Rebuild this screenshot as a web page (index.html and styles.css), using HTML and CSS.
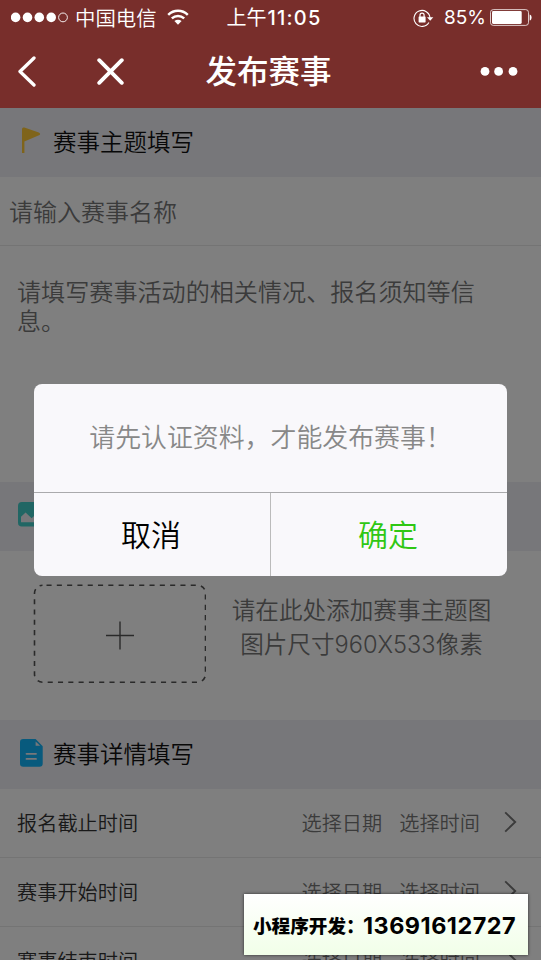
FILE: index.html
```html
<!DOCTYPE html>
<html lang="zh-CN">
<head>
<meta charset="utf-8">
<title>发布赛事</title>
<link rel="stylesheet" href="styles.css">
</head>
<body>
<div class="screen">
  <header class="top">
    <div class="status">
      <svg class="signal" width="58" height="12" viewBox="0 0 58 12"><g fill="#fff"><circle cx="4.6" cy="5.4" r="4.8"/><circle cx="16.5" cy="5.4" r="4.8"/><circle cx="28.3" cy="5.4" r="4.8"/><circle cx="40.2" cy="5.4" r="4.8"/></g><circle cx="52" cy="5.4" r="4.4" fill="none" stroke="#fff" stroke-width=".9"/></svg>
      <span class="carrier">中国电信</span>
      <svg class="wifi" width="22" height="17" viewBox="0 0 22 17"><g fill="none" stroke="#fff" stroke-width="2.5"><path d="M1.2 5.8C6.8.5 15.2.5 20.8 5.8"/><path d="M4.8 9.4C8.4 6.2 13.6 6.2 17.2 9.4"/></g><path d="M7.4 12C9.5 10.2 12.5 10.2 14.6 12L11 15.8Z" fill="#fff"/></svg>
      <span class="clock">上午<span class="digits">11:05</span></span>
      <svg class="lock" width="21" height="18" viewBox="0 0 21 18"><path d="M15.9 13.5A8 8 0 1 1 17 9" fill="none" stroke="#fff" stroke-width="1.1"/><path d="M14 8.2h6.3L17.2 11.8Z" fill="#fff"/><rect x="5.6" y="7.4" width="7" height="6" rx=".6" fill="#fff"/><path d="M7 8V6.2a2.05 2.05 0 0 1 4.1 0V8" fill="none" stroke="#fff" stroke-width="1.2"/></svg>
      <span class="percent">85%</span>
      <svg class="battery" width="42" height="17" viewBox="0 0 42 17"><rect x=".5" y=".6" width="38" height="15.8" rx="2.8" fill="none" stroke="#fff" stroke-opacity=".75"/><rect x="2" y="2.1" width="29.7" height="12.8" rx="1.3" fill="#fff"/><path d="M39.7 5.4c2.5.5 2.5 5.7 0 6.2Z" fill="#fff"/></svg>
    </div>
    <nav class="nav">
      <svg class="back" width="19" height="32" viewBox="0 0 19 32"><path d="M17 2 3 15.5 17 29" fill="none" stroke="#fff" stroke-width="3.3" stroke-linecap="round" stroke-linejoin="round"/></svg>
      <svg class="close" width="27" height="27" viewBox="0 0 27 27"><path d="m2.2 2.2 22.6 22.6M24.8 2.2 2.2 24.8" stroke="#fff" stroke-width="3.8" stroke-linecap="round"/></svg>
      <h1>发布赛事</h1>
      <svg class="more" width="38" height="10" viewBox="0 0 38 10" fill="#fff"><circle cx="5" cy="4.4" r="4.4"/><circle cx="18.6" cy="4.4" r="4.4"/><circle cx="33" cy="4.4" r="4.4"/></svg>
    </nav>
  </header>
  <main class="page">
    <h2 class="section">
      <svg width="24" height="28" viewBox="0 0 24 28"><path d="M2 2.2Q2-.2 4.4.6L18.8 5.6Q21.4 6.9 19 8.3L4.4 14.6V26H2Z" fill="#ffc936"/></svg>
      赛事主题填写
    </h2>
    <div class="field">请输入赛事名称</div>
    <div class="textarea">请填写赛事活动的相关情况、报名须知等信息。</div>
    <h2 class="section">
      <svg class="picture" width="26" height="25" viewBox="0 0 26 25"><rect width="26" height="24.5" rx="3.8" fill="#42cdc8"/><path d="M3 20.3v-5.5l4.6-4.2 6 5.6 4.4-4 5 4v4.1Z" fill="#efeff4"/></svg>
    </h2>
    <div class="upload">
      <svg width="173" height="99" viewBox="0 0 173 99"><rect x="1.5" y="1.2" width="171" height="97" rx="8" fill="none" stroke="#555" stroke-width="1.6" stroke-dasharray="5.1 5.2" stroke-dashoffset="-4"/><path d="M73 51.5h28M87 37.5v28" stroke="#555" stroke-width="1.4"/></svg>
      <p>请在此处添加赛事主题图<br>图片尺寸960X533像素</p>
    </div>
    <h2 class="section">
      <svg width="24" height="28" viewBox="0 0 24 28"><path d="M3.2 0H15.6L22.7 7.2V24.5a3.2 3.2 0 0 1-3.2 3.2H3.2A3.2 3.2 0 0 1 0 24.5V3.2A3.2 3.2 0 0 1 3.2 0Z" fill="#10b4fa"/><path d="M15.6 2.5V6.8h4.6Z" fill="#efeff4"/><path d="M6.5 14.8H16M6.5 19.9H16" stroke="#efeff4" stroke-width="1.8" stroke-linecap="round"/></svg>
      赛事详情填写
    </h2>
    <div class="row"><span class="label">报名截止时间</span><span>选择日期</span><span class="time">选择时间</span><svg width="13" height="22" viewBox="0 0 13 22"><path d="m1.2 1.4 10 9.6-10 9.6" fill="none" stroke="#777" stroke-width="1.9"/></svg></div>
    <div class="row"><span class="label">赛事开始时间</span><span>选择日期</span><span class="time">选择时间</span><svg width="13" height="22" viewBox="0 0 13 22"><path d="m1.2 1.4 10 9.6-10 9.6" fill="none" stroke="#777" stroke-width="1.9"/></svg></div>
    <div class="row"><span class="label">赛事结束时间</span><span>选择日期</span><span class="time">选择时间</span><svg width="13" height="22" viewBox="0 0 13 22"><path d="m1.2 1.4 10 9.6-10 9.6" fill="none" stroke="#777" stroke-width="1.9"/></svg></div>
    <div class="mask"></div>
  </main>
  <div class="dialog" role="dialog">
    <p>请先认证资料，才能发布赛事！</p>
    <div class="actions"><button>取消</button><button class="ok">确定</button></div>
  </div>
  <div class="contact"><span>小程序开发：</span><b>13691612727</b></div>
</div>
</body>
</html>
```
FILE: styles.css
```css
* { box-sizing: border-box; margin: 0; }
body { font-family: Inter, "Noto Sans CJK SC", sans-serif; font-weight: 350; }
svg { display: block; flex: none; }
.screen { position: relative; display: flex; flex-direction: column; width: 541px; height: 960px; overflow: hidden; }
.top { height: 108px; flex: none; background: #782e2b; color: #fff; }
.status { display: flex; align-items: center; height: 35px; padding-left: 11px; white-space: nowrap; }
.carrier { width: 82px; margin-left: 6px; padding-bottom: 2px; font-size: 20.4px; }
.wifi { margin-left: 9.5px; }
.clock { width: 96px; margin-left: 38px; padding-bottom: 2px; font-size: 20px; font-weight: 400; }
.digits { margin-left: 1px; font-weight: 500; letter-spacing: 1.2px; }
.lock { margin-left: 90.5px; }
.percent { width: 42px; margin-left: 10px; font-size: 19px; font-weight: 400; }
.battery { margin-left: 4px; }
.nav { display: flex; align-items: center; height: 73px; padding: 0 23px 0 17px; }
.close { margin-left: 61px; }
.nav h1 { margin-left: 81.5px; font-size: 31.5px; line-height: 44px; font-weight: 500; white-space: nowrap; }
.more { margin-left: auto; }
.page { position: relative; flex: 1; min-height: 0; overflow: hidden; background: #fff; }
.section { display: flex; align-items: center; gap: 9px; height: 69px; padding-left: 20px; padding-bottom: 3px; background: #efeff4; color: #111; font-size: 23.5px; font-weight: 350; }
.picture { margin: -2px 0 0 -2px; }
.field { height: 69px; padding-left: 9px; border-bottom: 1px solid #e8e8e8; color: #777; font-size: 24px; line-height: 71px; }
.textarea { height: 236px; padding: 32px 48px 0 17px; color: #777; font-size: 24.1px; line-height: 29px; }
.upload { display: flex; height: 169px; padding: 33px 0 0 33px; color: #777; }
.upload p { width: 262px; margin: 10px 0 0 24.5px; font-size: 23.6px; line-height: 34px; text-align: center; white-space: nowrap; }
.row { display: flex; align-items: center; height: 69px; padding: 0 24px 1px 17px; border-bottom: 1px solid #e8e8e8; color: #777; font-size: 20.2px; white-space: nowrap; }
.row svg { margin-top: -1px; }
.label { margin-right: auto; color: #333; }
.time { margin: 0 24px 0 17px; }
.mask { position: absolute; inset: 0; background: rgba(0, 0, 0, .5); }
.dialog { position: absolute; left: 34px; top: 384px; width: 473px; height: 192px; border-radius: 8px; overflow: hidden; background: #f9f8fb; }
.dialog p { height: 108px; color: #888; font-size: 25.9px; line-height: 107px; text-align: center; white-space: nowrap; }
.actions { display: flex; height: 84px; border-top: 1px solid #aaaaac; }
.actions button { flex: 1; padding: 0 2px 3px 0; border: 0; background: none; font: inherit; font-size: 30px; color: #000; }
.actions .ok { border-left: 1px solid #bbb; color: #2fc713; }
.contact { position: absolute; left: 244px; top: 894px; display: flex; align-items: center; width: 284px; height: 61px; padding-left: 9px; background: linear-gradient(#fff, #f1ffe8); box-shadow: 0 0 3px rgba(0, 0, 0, .65); color: #000; white-space: nowrap; }
.contact span { width: 110px; font-size: 18.6px; font-weight: 900; }
.contact b { padding-top: 1px; font: 700 23.4px Inter, sans-serif; letter-spacing: .5px; }
```
